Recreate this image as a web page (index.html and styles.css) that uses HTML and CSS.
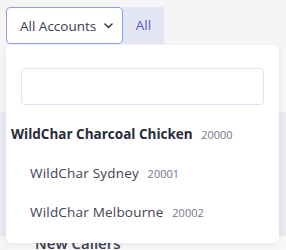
FILE: index.html
```html
<!DOCTYPE html>
<html lang="en">
<head>
    <meta charset="UTF-8">
    <meta name="viewport" content="width=device-width, initial-scale=1.0">
    <title>Accounts</title>
    <link rel="stylesheet" href="styles.css">
</head>
<body>
    <div class="topbar">
        <button class="account-btn">
            <span>All Accounts</span>
            <svg class="chevron" width="9" height="6" viewBox="0 0 9 6"><path d="M1 1l3.5 3.5L8 1" fill="none" stroke="#3a3d4d" stroke-width="1.6" stroke-linecap="round" stroke-linejoin="round"/></svg>
        </button>
        <div class="tab">All</div>
    </div>

    <div class="content">
        <div class="spacer"></div>
        <div class="table-head"></div>
        <div class="section">
            <h2>New Callers</h2>
        </div>
    </div>

    <div class="dropdown">
        <input class="search" type="text">
        <ul class="accounts">
            <li class="parent">WildChar Charcoal Chicken <span class="code">20000</span></li>
            <li class="child">WildChar Sydney <span class="code">20001</span></li>
            <li class="child">WildChar Melbourne <span class="code">20002</span></li>
        </ul>
    </div>
</body>
</html>
```

FILE: styles.css
```css
body {
    margin: 0;
    font-family: "Open Sans", Arial, sans-serif;
    background-color: #f5f5f8;
    color: #2b2e3f;
    height: 250px;
    overflow: hidden;
}

.topbar {
    display: flex;
    padding: 7px 0 0 6px;
}

.account-btn {
    display: flex;
    align-items: center;
    gap: 8px;
    width: 117px;
    height: 37px;
    padding: 0 0 0 13px;
    background-color: #fff;
    border: 1px solid #8e9df0;
    border-radius: 4px;
    font-family: inherit;
    font-size: 13.5px;
    color: #3a3d4d;
}

.tab {
    width: 41px;
    height: 37px;
    line-height: 37px;
    text-align: center;
    background-color: #e4e6f4;
    color: #4f5ad6;
    font-size: 13.5px;
}

.spacer {
    height: 68px;
}

.table-head {
    height: 124px;
    background-color: #e8e8ef;
}

.section {
    margin-left: 10px;
    background-color: #f8f8fa;
    height: 14px;
    padding-left: 25px;
}

.section h2 {
    margin: 0;
    font-size: 15px;
    font-weight: 600;
    line-height: 14px;
    color: #3a3d4d;
}

.dropdown {
    position: absolute;
    left: 6px;
    top: 45px;
    width: 273px;
    height: 198px;
    box-sizing: border-box;
    background-color: #fff;
    border-radius: 5px;
    box-shadow: 0 2px 6px rgba(40, 40, 80, 0.08);
    padding: 23px 15px 0 15px;
}

.search {
    display: block;
    width: 100%;
    height: 37px;
    box-sizing: border-box;
    border: 1px solid #dee1ef;
    border-radius: 4px;
    outline: none;
}

.accounts {
    list-style: none;
    margin: 0;
    padding: 0;
}

.accounts li {
    height: 39px;
    line-height: 39px;
    font-size: 13.5px;
    white-space: nowrap;
}

.parent {
    margin: 10px 0 0 -10px;
    font-weight: 700;
    color: #262a3b;
}

.child {
    margin-left: 9px;
    letter-spacing: 0.2px;
    color: #3f4252;
}

.code {
    margin-left: 5px;
    font-size: 11px;
    font-weight: 400;
    letter-spacing: 0;
    color: #73768a;
}
```
